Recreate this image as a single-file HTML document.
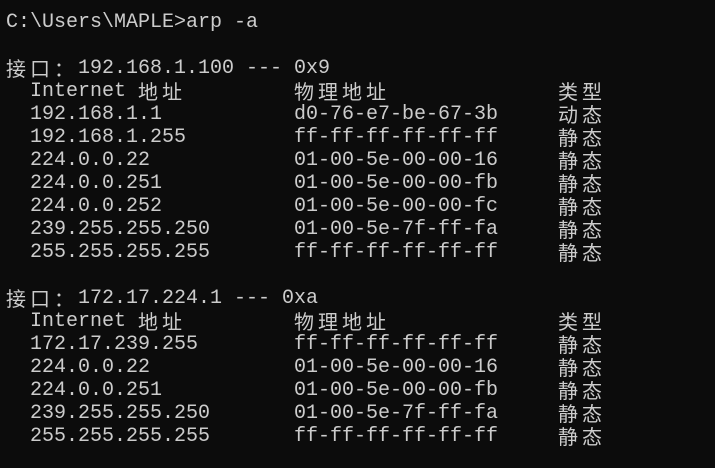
<!DOCTYPE html><html><head><style>
body{margin:0;background:#0c0c0c;width:715px;height:468px;overflow:hidden;position:relative}
div{position:absolute;left:0;height:23px;width:715px}
span{position:absolute;top:1px;white-space:pre;font-family:"Liberation Mono",monospace;font-size:20px;line-height:23px;color:#cccccc}
.c{font-family:"Noto Sans CJK SC",sans-serif;letter-spacing:4px;font-size:20px;line-height:23px;top:0px}
</style></head><body>
<div style="top:10px"><span style="left:6px">C:\Users\MAPLE&gt;arp -a</span></div>

<div style="top:56px"><span class="c" style="left:6px">接口：</span><span style="left:78px">192.168.1.100 --- 0x9</span></div>
<div style="top:79px"><span style="left:30px">Internet</span><span class="c" style="left:138px">地址</span><span class="c" style="left:294px">物理地址</span><span class="c" style="left:558px">类型</span></div>
<div style="top:102px"><span style="left:30px">192.168.1.1</span><span style="left:294px">d0-76-e7-be-67-3b</span><span class="c" style="left:558px">动态</span></div>
<div style="top:125px"><span style="left:30px">192.168.1.255</span><span style="left:294px">ff-ff-ff-ff-ff-ff</span><span class="c" style="left:558px">静态</span></div>
<div style="top:148px"><span style="left:30px">224.0.0.22</span><span style="left:294px">01-00-5e-00-00-16</span><span class="c" style="left:558px">静态</span></div>
<div style="top:171px"><span style="left:30px">224.0.0.251</span><span style="left:294px">01-00-5e-00-00-fb</span><span class="c" style="left:558px">静态</span></div>
<div style="top:194px"><span style="left:30px">224.0.0.252</span><span style="left:294px">01-00-5e-00-00-fc</span><span class="c" style="left:558px">静态</span></div>
<div style="top:217px"><span style="left:30px">239.255.255.250</span><span style="left:294px">01-00-5e-7f-ff-fa</span><span class="c" style="left:558px">静态</span></div>
<div style="top:240px"><span style="left:30px">255.255.255.255</span><span style="left:294px">ff-ff-ff-ff-ff-ff</span><span class="c" style="left:558px">静态</span></div>

<div style="top:286px"><span class="c" style="left:6px">接口：</span><span style="left:78px">172.17.224.1 --- 0xa</span></div>
<div style="top:309px"><span style="left:30px">Internet</span><span class="c" style="left:138px">地址</span><span class="c" style="left:294px">物理地址</span><span class="c" style="left:558px">类型</span></div>
<div style="top:332px"><span style="left:30px">172.17.239.255</span><span style="left:294px">ff-ff-ff-ff-ff-ff</span><span class="c" style="left:558px">静态</span></div>
<div style="top:355px"><span style="left:30px">224.0.0.22</span><span style="left:294px">01-00-5e-00-00-16</span><span class="c" style="left:558px">静态</span></div>
<div style="top:378px"><span style="left:30px">224.0.0.251</span><span style="left:294px">01-00-5e-00-00-fb</span><span class="c" style="left:558px">静态</span></div>
<div style="top:401px"><span style="left:30px">239.255.255.250</span><span style="left:294px">01-00-5e-7f-ff-fa</span><span class="c" style="left:558px">静态</span></div>
<div style="top:424px"><span style="left:30px">255.255.255.255</span><span style="left:294px">ff-ff-ff-ff-ff-ff</span><span class="c" style="left:558px">静态</span></div>
</body></html>
